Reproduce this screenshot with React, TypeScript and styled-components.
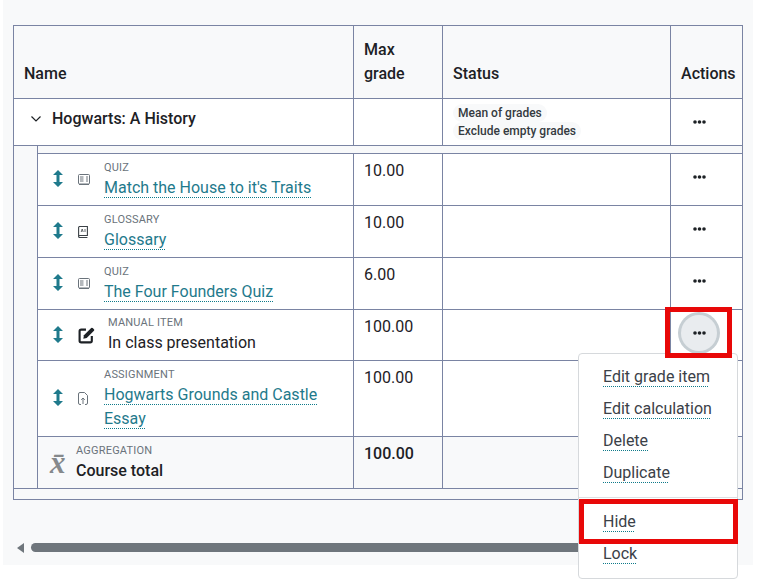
import React from "react";
import styled, { createGlobalStyle } from "styled-components";

const Global = createGlobalStyle`
  html, body { margin: 0; padding: 0; background: #fff; }
  body { min-height: 588px; font-family: Roboto, "Liberation Sans", sans-serif; font-size: 16px; color: #1d2125; }
`;

const Page = styled.div`
  position: relative;
  box-sizing: border-box;
  margin-left: 3px;
  width: 750px;
  height: 565px;
  padding: 25px 10px 0;
  background: #f8f9fa;
`;

const Table = styled.table`
  width: 730px;
  table-layout: fixed;
  border-collapse: collapse;
  line-height: 24px;
`;

const Row = styled.tr<{ $h: number }>`
  height: ${(p) => p.$h}px;
`;

const Th = styled.th`
  box-sizing: border-box;
  border: 1px solid #7a84a3;
  padding: 0 0 12px 10px;
  text-align: left;
  vertical-align: bottom;
  font-weight: 500;
  background: #f8f9fa;
`;

const NarrowTh = styled(Th)`
  padding-right: 30px;
`;

const Td = styled.td<{ $muted?: boolean; $bold?: boolean }>`
  box-sizing: border-box;
  border: 1px solid #7a84a3;
  padding: 5px 10px 0;
  vertical-align: top;
  background: ${(p) => (p.$muted ? "#f8f9fa" : "#fff")};
  font-weight: ${(p) => (p.$bold ? 500 : 400)};
`;

const BareTd = styled.td`
  border: 1px solid #7a84a3;
  padding: 0;
  background: #f8f9fa;
`;

const ActionTd = styled(Td)`
  padding: 5px 0 0 10px;
`;

const GroupTd = styled(Td)`
  padding: 0;
`;

const NameTd = styled(Td)`
  padding: 0;
  vertical-align: middle;
`;

const GroupName = styled.div`
  display: flex;
  align-items: center;
  height: 40px;
  padding-left: 16px;
  gap: 10px;
  font-weight: 500;
`;

const ItemName = styled.div<{ $pad?: number }>`
  display: flex;
  align-items: center;
  padding-left: ${(p) => p.$pad ?? 15}px;
`;

const Slot = styled.span<{ $w: number }>`
  flex: none;
  display: flex;
  align-items: center;
  width: ${(p) => p.$w}px;
`;

const MoveSvg = styled.svg`
  display: block;
  margin-top: -2px;
`;

const Gray = styled.svg`
  display: block;
  color: #6a737b;
`;

const Mean = styled.span`
  font-family: "Liberation Serif", serif;
  font-style: italic;
  font-weight: 700;
  font-size: 31px;
  line-height: 24px;
  color: #85898c;
  margin-left: 1px;
`;

const TextCol = styled.div`
  display: flex;
  flex-direction: column;
  min-width: 0;
`;

const Kind = styled.span`
  font-size: 11px;
  line-height: 16px;
  letter-spacing: 0.2px;
  text-transform: uppercase;
  color: #6a737b;
`;

const ItemLink = styled.a`
  color: #1f7a8c;
  text-decoration: underline dotted #0f7a8a 1px;
  text-underline-offset: 4px;
`;

const Strong = styled.span`
  font-weight: 500;
`;

const Pills = styled.div`
  display: flex;
  flex-direction: column;
  align-items: flex-start;
`;

const Pill = styled.span`
  padding: 0 5px;
  height: 18px;
  line-height: 18px;
  border-radius: 9px;
  background: #f8f9fa;
  font-size: 12px;
  font-weight: 500;
  color: #343a40;
`;

const DotsButton = styled.button<{ $active?: boolean }>`
  display: flex;
  align-items: center;
  justify-content: center;
  width: 36px;
  height: 36px;
  padding: 0;
  border: 0;
  border-radius: 50%;
  color: #1d2125;
  background: ${(p) => (p.$active ? "#e9ecef" : "transparent")};
  box-shadow: ${(p) => (p.$active ? "0 0 0 3px #c6ced3" : "none")};
`;

const Scrollbar = styled.div`
  display: flex;
  align-items: flex-start;
  gap: 7px;
  margin: 43px 0 0 4px;
  height: 10px;
`;

const ArrowLeft = styled.span`
  width: 0;
  height: 0;
  border-style: solid;
  border-width: 5px 7px 5px 0;
  border-color: transparent #6f767c transparent transparent;
`;

const Thumb = styled.div`
  width: 707px;
  height: 9px;
  border-radius: 5px 0 0 5px;
  background: #6f767c;
`;

const Menu = styled.div`
  position: absolute;
  left: 575px;
  top: 353px;
  box-sizing: border-box;
  width: 160px;
  height: 226px;
  padding: 7px 0 8px;
  background: #fff;
  border: 1px solid #d6d9dc;
  border-radius: 4px;
`;

const MenuItem = styled.div`
  height: 32px;
  line-height: 32px;
  padding-left: 24px;
  color: #3b4148;
`;

const MenuLink = styled.a`
  text-decoration: underline dotted #0f7a8a 1px;
  text-underline-offset: 4px;
`;

const MenuDivider = styled.div`
  height: 1px;
  margin: 8px 0;
  background: #dcdfe2;
`;

const Callout = styled.div<{ $l: number; $t: number; $w: number; $h: number }>`
  position: absolute;
  left: ${(p) => p.$l}px;
  top: ${(p) => p.$t}px;
  width: ${(p) => p.$w}px;
  height: ${(p) => p.$h}px;
  box-sizing: border-box;
  border: 5px solid #e80808;
`;

const MoveIcon = () => (
  <MoveSvg width="10" height="17" viewBox="0 0 10 17" fill="#1f7a8c">
    <path d="M5 0 10 5H6.5v7H10L5 17 0 12h3.5V5H0z" />
  </MoveSvg>
);

const Dots = () => (
  <svg width="13" height="4" viewBox="0 0 13 4" fill="#1d2125">
    <circle cx="2" cy="2" r="1.8" />
    <circle cx="6.5" cy="2" r="1.8" />
    <circle cx="11" cy="2" r="1.8" />
  </svg>
);

const EditIcon = () => (
  <svg width="17" height="17" viewBox="0 0 16 16" fill="none">
    <path d="M7.5 2.5H3A1.5 1.5 0 0 0 1.5 4v9A1.5 1.5 0 0 0 3 14.5h8.5A1.5 1.5 0 0 0 13 13V8.5" stroke="#1d2125" strokeWidth="2" />
    <path d="M5 11l.6-3.2L12.4 1a1 1 0 0 1 1.4 0l1.2 1.2a1 1 0 0 1 0 1.4L8.2 10.4z" fill="#1d2125" />
  </svg>
);

const QuizIcon = () => (
  <Gray width="12" height="11" viewBox="0 0 12 11" fill="none" stroke="currentColor" strokeWidth="1">
    <rect x="0.5" y="0.5" width="11" height="9.5" rx="1" />
    <path d="M2 3h3.5M2 5h3.5M2 7h3.5M8 3h2M8 5h2M8 7h2M1 10.5h10" />
  </Gray>
);

const GlossaryIcon = () => (
  <Gray width="10" height="12" viewBox="0 0 10 12" fill="none" stroke="#3c4247" strokeWidth="1.1">
    <path d="M.6 10.5V1.5a1 1 0 0 1 1-1h7.8v9H1.6a1 1 0 0 0-1 1 1 1 0 0 0 1 1h7.8" />
    <path d="M3.2 6l1-3 1 3M7 3v3" strokeWidth="0.8" />
  </Gray>
);

const AssignIcon = () => (
  <Gray width="10" height="13" viewBox="0 0 10 13" fill="none" stroke="currentColor" strokeWidth="1">
    <path d="M3 12.5H2a1.5 1.5 0 0 1-1.5-1.5V2A1.5 1.5 0 0 1 2 .5h4.5l3 3V11A1.5 1.5 0 0 1 8 12.5H7" />
    <path d="M5 12V6M3.2 7.8 5 6l1.8 1.8" />
  </Gray>
);

const Chevron = () => (
  <svg width="12" height="8" viewBox="0 0 12 8" fill="none" stroke="#1d2125" strokeWidth="1.2">
    <path d="M1.5 1.5 6 6l4.5-4.5" />
  </svg>
);

type Item = {
  kind: string;
  title: string;
  grade: string;
  icon: React.ReactNode;
  slot: number;
  h: number;
  link: boolean;
  active?: boolean;
};

const items: Item[] = [
  { kind: "Quiz", title: "Match the House to it's Traits", grade: "10.00", icon: <QuizIcon />, slot: 26, h: 52, link: true },
  { kind: "Glossary", title: "Glossary", grade: "10.00", icon: <GlossaryIcon />, slot: 26, h: 52, link: true },
  { kind: "Quiz", title: "The Four Founders Quiz", grade: "6.00", icon: <QuizIcon />, slot: 26, h: 52, link: true },
  { kind: "Manual item", title: "In class presentation", grade: "100.00", icon: <EditIcon />, slot: 30, h: 51, link: false, active: true },
  { kind: "Assignment", title: "Hogwarts Grounds and Castle Essay", grade: "100.00", icon: <AssignIcon />, slot: 26, h: 76, link: true },
];

const DotsCell = ({ active }: { active?: boolean }) => (
  <ActionTd>
    <DotsButton $active={active}>
      <Dots />
    </DotsButton>
  </ActionTd>
);

export default function App() {
  return (
    <>
      <Global />
      <Page>
        <Table>
          <colgroup>
            <col width="24" />
            <col width="316" />
            <col width="89" />
            <col width="228" />
            <col width="72" />
          </colgroup>
          <thead>
            <Row $h={73}>
              <Th colSpan={2}>Name</Th>
              <NarrowTh>Max grade</NarrowTh>
              <Th>Status</Th>
              <Th>Actions</Th>
            </Row>
          </thead>
          <tbody>
            <Row $h={47}>
              <GroupTd colSpan={2}>
                <GroupName>
                  <Chevron />
                  Hogwarts: A History
                </GroupName>
              </GroupTd>
              <Td />
              <Td>
                <Pills>
                  <Pill>Mean of grades</Pill>
                  <Pill>Exclude empty grades</Pill>
                </Pills>
              </Td>
              <DotsCell />
            </Row>
            <Row $h={8}>
              <BareTd rowSpan={7} />
              <BareTd colSpan={4} />
            </Row>
            {items.map((it) => (
              <Row $h={it.h} key={it.title}>
                <NameTd>
                  <ItemName>
                    <Slot $w={25}>
                      <MoveIcon />
                    </Slot>
                    <Slot $w={it.slot}>{it.icon}</Slot>
                    <TextCol>
                      <Kind>{it.kind}</Kind>
                      {it.link ? <span><ItemLink>{it.title}</ItemLink></span> : <span>{it.title}</span>}
                    </TextCol>
                  </ItemName>
                </NameTd>
                <Td>{it.grade}</Td>
                <Td />
                <DotsCell active={it.active} />
              </Row>
            ))}
            <Row $h={52}>
              <NameTd $muted>
                <ItemName $pad={11}>
                  <Slot $w={27}>
                    <Mean>x&#772;</Mean>
                  </Slot>
                  <TextCol>
                    <Kind>Aggregation</Kind>
                    <Strong>Course total</Strong>
                  </TextCol>
                </ItemName>
              </NameTd>
              <Td $muted $bold>100.00</Td>
              <Td $muted />
              <Td $muted />
            </Row>
            <Row $h={11}>
              <BareTd colSpan={5} />
            </Row>
          </tbody>
        </Table>
        <Scrollbar>
          <ArrowLeft />
          <Thumb />
        </Scrollbar>
        <Menu>
          <MenuItem><MenuLink>Edit grade item</MenuLink></MenuItem>
          <MenuItem><MenuLink>Edit calculation</MenuLink></MenuItem>
          <MenuItem><MenuLink>Delete</MenuLink></MenuItem>
          <MenuItem><MenuLink>Duplicate</MenuLink></MenuItem>
          <MenuDivider />
          <MenuItem><MenuLink>Hide</MenuLink></MenuItem>
          <MenuItem><MenuLink>Lock</MenuLink></MenuItem>
        </Menu>
        <Callout $l={662} $t={307} $w={67} $h={51} />
        <Callout $l={576} $t={499} $w={159} $h={45} />
      </Page>
    </>
  );
}
